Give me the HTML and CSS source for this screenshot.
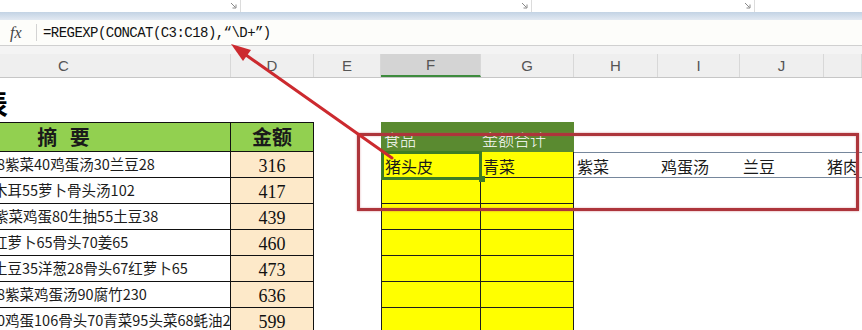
FILE: index.html
```html
<!DOCTYPE html>
<html lang="zh">
<head>
<meta charset="utf-8">
<link rel="stylesheet" href="styles.css">
</head>
<body>
<div class="app">
  <div class="ribbon">
    <div class="grp g1"><svg class="launch" width="7" height="7" viewBox="0 0 7 7"><path d="M1 1L5.5 5.5M2.5 6H6V2.5" fill="none" stroke="#8a8a8a" stroke-width="1"/></svg></div>
    <div class="grp g2"><svg class="launch" width="7" height="7" viewBox="0 0 7 7"><path d="M1 1L5.5 5.5M2.5 6H6V2.5" fill="none" stroke="#8a8a8a" stroke-width="1"/></svg></div>
    <div class="grp g3"><svg class="launch" width="7" height="7" viewBox="0 0 7 7"><path d="M1 1L5.5 5.5M2.5 6H6V2.5" fill="none" stroke="#8a8a8a" stroke-width="1"/></svg></div>
  </div>
  <div class="band"></div>
  <div class="fbar">
    <span class="fx">fx</span>
    <span class="fsep"></span>
    <span class="ftext">=REGEXP(CONCAT(C3:C18),“\D+”)</span>
  </div>
  <div class="colhdr">
    <div class="ch cC cutc">C</div>
    <div class="ch cD">D</div>
    <div class="ch cE">E</div>
    <div class="ch cF sel">F</div>
    <div class="ch cG">G</div>
    <div class="ch cH">H</div>
    <div class="ch cI">I</div>
    <div class="ch cJ">J</div>
    <div class="ch cK"></div>
  </div>
  <div class="sheet">
    <div class="row title">
      <div class="cell cC"><span class="bigtitle">表</span></div>
    </div>
    <div class="row head">
      <div class="cell cC lt lhead"><span class="hz">摘 要</span></div>
      <div class="cell cD lt lhead dc">金额</div>
      <div class="cell cE"></div>
      <div class="cell cF ghead">食品</div>
      <div class="cell cG ghead">金额合计</div>
    </div>
    <div class="row data">
      <div class="cell cC lt"><span class="txt cutd">8紫菜40鸡蛋汤30兰豆28</span></div>
      <div class="cell cD lt num">316</div>
      <div class="cell cE"></div>
      <div class="cell cF yl active">猪头皮</div>
      <div class="cell cG yl">青菜</div>
      <div class="cell cH ln">紫菜</div>
      <div class="cell cI ln">鸡蛋汤</div>
      <div class="cell cJ ln">兰豆</div>
      <div class="cell cK ln">猪肉</div>
    </div>
    <div class="row data">
      <div class="cell cC lt"><span class="txt cuth">木耳55萝卜骨头汤102</span></div>
      <div class="cell cD lt num">417</div>
      <div class="cell cE"></div>
      <div class="cell cF yl"></div>
      <div class="cell cG yl"></div>
    </div>
    <div class="row data">
      <div class="cell cC lt"><span class="txt cuth2">紫菜鸡蛋80生抽55土豆38</span></div>
      <div class="cell cD lt num">439</div>
      <div class="cell cE"></div>
      <div class="cell cF yl"></div>
      <div class="cell cG yl"></div>
    </div>
    <div class="row data">
      <div class="cell cC lt"><span class="txt cuth">红萝卜65骨头70姜65</span></div>
      <div class="cell cD lt num">460</div>
      <div class="cell cE"></div>
      <div class="cell cF yl"></div>
      <div class="cell cG yl"></div>
    </div>
    <div class="row data">
      <div class="cell cC lt"><span class="txt cuth">土豆35洋葱28骨头67红萝卜65</span></div>
      <div class="cell cD lt num">473</div>
      <div class="cell cE"></div>
      <div class="cell cF yl"></div>
      <div class="cell cG yl"></div>
    </div>
    <div class="row data">
      <div class="cell cC lt"><span class="txt cutd">8紫菜鸡蛋汤90腐竹230</span></div>
      <div class="cell cD lt num">636</div>
      <div class="cell cE"></div>
      <div class="cell cF yl"></div>
      <div class="cell cG yl"></div>
    </div>
    <div class="row data">
      <div class="cell cC lt"><span class="txt cutd">0鸡蛋106骨头70青菜95头菜68蚝油25</span></div>
      <div class="cell cD lt num">599</div>
      <div class="cell cE"></div>
      <div class="cell cF yl"></div>
      <div class="cell cG yl"></div>
    </div>
  </div>
  <div class="redbox"></div>
  <svg class="arrow" width="862" height="330" viewBox="0 0 862 330">
    <line x1="392" y1="158" x2="246" y2="55" stroke="#cc2a2f" stroke-width="3" stroke-linecap="round"/>
    <polygon points="231,44 251,50 243,61" fill="#cc2a2f"/>
  </svg>
</div>
</body>
</html>
```
FILE: styles.css
```css
* { box-sizing: border-box; margin: 0; padding: 0; }
body { margin: 0; background: #fff; font-family: "Noto Sans CJK SC", "Liberation Sans", sans-serif; }
.app { position: relative; width: 862px; height: 330px; overflow: hidden; background: #fff; }

.ribbon { height: 12px; display: flex; background: #fff; }
.grp { height: 12px; border-right: 1px solid #dcdcdc; display: flex; justify-content: flex-end; align-items: flex-start; padding: 2px 3px 0 0; }
.g1 { width: 241px; }
.g2 { width: 291px; }
.g3 { width: 223px; }
.launch { display: block; }

.band { height: 8px; background: linear-gradient(#c3d3e4, #e2e9f2); }

.fbar { height: 26px; display: flex; align-items: center; background: #fdfdfa; border-bottom: 1px solid #d0d0d0; }
.fx { width: 36px; padding-left: 10px; font: italic 16px "Liberation Serif", serif; color: #444; }
.fsep { width: 1px; height: 17px; background: #d3d3d3; }
.ftext { margin-left: 6px; font: 14px "Liberation Mono", monospace; letter-spacing: -0.55px; color: #111; }

.colhdr { height: 32px; padding-top: 8px; display: flex; background: #f4f4f4; border-bottom: 1px solid #c6c6c6; }
.ch { height: 23px; display: flex; align-items: center; justify-content: center; border-right: 1px solid #d8d8d8; font: 15px "Liberation Sans", sans-serif; color: #555; background: #efefef; }
.ch.cutc { padding-right: 103px; }
.ch.sel { background: #d4d4d4; border-bottom: 2px solid #3d8b3d; }

.cC { width: 231px; }
.cD { width: 83px; }
.cE { width: 67px; }
.cF { width: 100px; }
.cG { width: 93px; }
.cH { width: 84px; }
.cI { width: 82px; }
.cJ { width: 84px; }
.cK { width: 38px; }

.sheet { display: flex; flex-direction: column; }
.row { display: flex; flex: none; }
.row.title { height: 44px; }
.row.head { height: 30px; }
.row.data { height: 26px; }

.cell { flex: none; position: relative; overflow: hidden; white-space: nowrap; display: flex; align-items: center; }

.bigtitle { font: 700 28px "Noto Sans CJK SC", sans-serif; color: #000; margin-left: -20px; line-height: 1; margin-top: 6px; }

.lt { border-right: 1px solid #111; border-bottom: 1px solid #111; }
.lhead { border-top: 1px solid #111; background: #92d050; font: 700 20px "Noto Sans CJK SC", sans-serif; color: #1a1a1a; line-height: 1; }
.lhead.cC { justify-content: center; padding-right: 103px; }
.hz { word-spacing: 8px; }
.dc { justify-content: center; }

.txt { font-size: 14.5px; color: #1c1c1c; line-height: 1; }
.cutd { margin-left: -3px; }
.cuth { margin-left: -7px; }
.cuth2 { margin-left: -6px; }

.num { justify-content: center; background: #fde9c9; font: 18px "Liberation Serif", serif; color: #111; line-height: 1; padding-top: 3px; }

.ghead { background: #5a8a30; color: #fff; font-size: 16px; line-height: 1; align-items: flex-end; padding: 0 0 5px 3px; font-weight: 300; }
.ghead.cG { padding-left: 1px; }

.yl { background: #ffff00; border-bottom: 1px solid #1e1e1e; border-right: 1px solid #1e1e1e; font-size: 16px; color: #1a1a1a; line-height: 1; padding: 3px 0 0 3px; }
.yl.cF { border-left: 1px solid #1e1e1e; }
.yl.cG { padding-left: 2px; }

.active { overflow: visible; z-index: 1; }
.active::after { content: ""; position: absolute; top: -1px; left: -1px; right: -2px; bottom: -3px; border: 3px solid #3f7d24; pointer-events: none; }
.active::before { content: ""; position: absolute; right: -5px; bottom: -5px; width: 6px; height: 6px; background: #3f7d24; z-index: 2; }

.ln { border-top: 1px solid #76879c; border-bottom: 1px solid #76879c; font-size: 16px; color: #1a1a1a; line-height: 1; padding: 2px 0 0 3px; overflow: visible; }

.redbox { position: absolute; left: 357px; top: 133px; width: 502px; height: 78px; border: 3px solid #ad353b; box-shadow: 0 0 2px rgba(190, 70, 80, 0.6), inset 0 0 2px rgba(190, 70, 80, 0.5); pointer-events: none; z-index: 3; }
.arrow { position: absolute; left: 0; top: 0; pointer-events: none; z-index: 4; }
```
